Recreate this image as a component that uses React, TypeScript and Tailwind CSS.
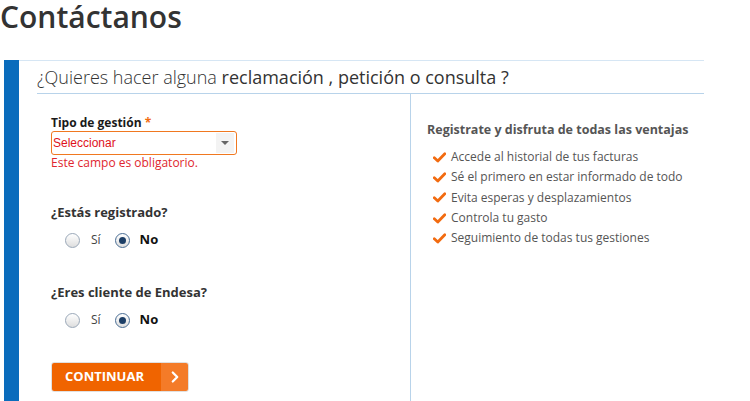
import { ChevronRight } from "lucide-react";

const ventajas = [
  "Accede al historial de tus facturas",
  "Sé el primero en estar informado de todo",
  "Evita esperas y desplazamientos",
  "Controla tu gasto",
  "Seguimiento de todas tus gestiones",
];

function Check() {
  return (
    <svg width="13" height="11" viewBox="0 0 13 11" className="shrink-0">
      <path d="M1.3 5.8 L4.8 9 L11.8 1.8" fill="none" stroke="#f26b10" strokeWidth="2.8" strokeLinecap="round" strokeLinejoin="round" />
    </svg>
  );
}

function Radio({ checked }: { checked?: boolean }) {
  return (
    <span
      className={`w-[15px] h-[15px] rounded-full border flex items-center justify-center bg-gradient-to-b from-white to-[#dedede] ${
        checked ? "border-[#4a6e95]" : "border-[#9aa8b8]"
      }`}
    >
      {checked && <span className="w-[7px] h-[7px] rounded-full bg-[#1c3e66]" />}
    </span>
  );
}

function RadioGroup({ label }: { label: string }) {
  return (
    <div>
      <p className="text-[13px] font-bold text-[#333] leading-[18px]">{label}</p>
      <div className="flex items-center mt-[10px] ml-[14px] h-[18px]">
        <Radio />
        <span className="ml-[11px] text-[12px] text-[#444]">Sí</span>
        <span className="ml-[14px]"><Radio checked /></span>
        <span className="ml-[10px] text-[13px] font-bold text-[#111]">No</span>
      </div>
    </div>
  );
}

export default function App() {
  return (
    <div className="w-[750px] h-[401px] overflow-hidden bg-white font-['Open_Sans',sans-serif]">
      <h1 className="text-[30px] font-semibold text-[#333] leading-[34px]">Contáctanos</h1>

      <div className="ml-1 mt-[26px] w-[700px] h-[400px] border-l-[15px] border-[#0a6cbc]">
        <div className="border-t border-[#d6e6f4]">
          <div className="ml-[18px] h-[33px] border-b border-[#b8d3ea] flex items-center text-[18px] text-[#333] leading-none">
            <span className="font-light">
              ¿Quieres hacer alguna <span className="font-normal">reclamación , petición o consulta ?</span>
            </span>
          </div>
        </div>

        {/* Body */}
        <div className="flex h-full">
          <div className="w-[391px] pl-[32px] pt-[21px]">
            <p className="text-[12px] font-bold text-[#1a1a1a] leading-[16px]">
              Tipo de gestión <span className="text-[#f26b10]">*</span>
            </p>
            <div className="w-[186px] h-[24px] border border-[#f07820] rounded-[3px] flex items-center justify-between">
              <span className="pl-[1px] text-[12px] text-[#e0121b] font-['Liberation_Sans',sans-serif]">Seleccionar</span>
              <span className="w-[18px] h-[20px] mr-[2px] bg-[#f3f3f3] flex items-center justify-center">
                <span className="w-0 h-0 border-l-[4px] border-r-[4px] border-t-[4px] border-l-transparent border-r-transparent border-t-[#666]" />
              </span>
            </div>
            <p className="text-[12px] text-[#e0262e] leading-[15px]">Este campo es obligatorio.</p>

            <div className="mt-[33px]">
              <RadioGroup label="¿Estás registrado?" />
            </div>
            <div className="mt-[34px]">
              <RadioGroup label="¿Eres cliente de Endesa?" />
            </div>

            <button className="mt-[33px] flex h-[30px] w-[138px] rounded-[3px] overflow-hidden border border-[#e0e0e0]">
              <span className="flex-1 bg-[#f06400] text-white text-[13px] font-bold flex items-center justify-center pr-[4px]">CONTINUAR</span>
              <span className="w-[27px] bg-[#f47b28] flex items-center justify-center">
                <ChevronRight size={18} strokeWidth={3} color="white" />
              </span>
            </button>
          </div>

          <div className="flex-1 border-l border-[#b8d3ea] pl-[16px] pt-[27px]">
            <p className="text-[12.5px] font-bold text-[#555] leading-[18px]">Registrate y disfruta de todas las ventajas</p>
            <ul className="mt-[8px] ml-[6px]">
              {ventajas.map((v) => (
                <li key={v} className="flex items-center gap-[5px] h-[20.3px] text-[12px] text-[#555]">
                  <Check />
                  <span>{v}</span>
                </li>
              ))}
            </ul>
          </div>
        </div>
      </div>
    </div>
  );
}
